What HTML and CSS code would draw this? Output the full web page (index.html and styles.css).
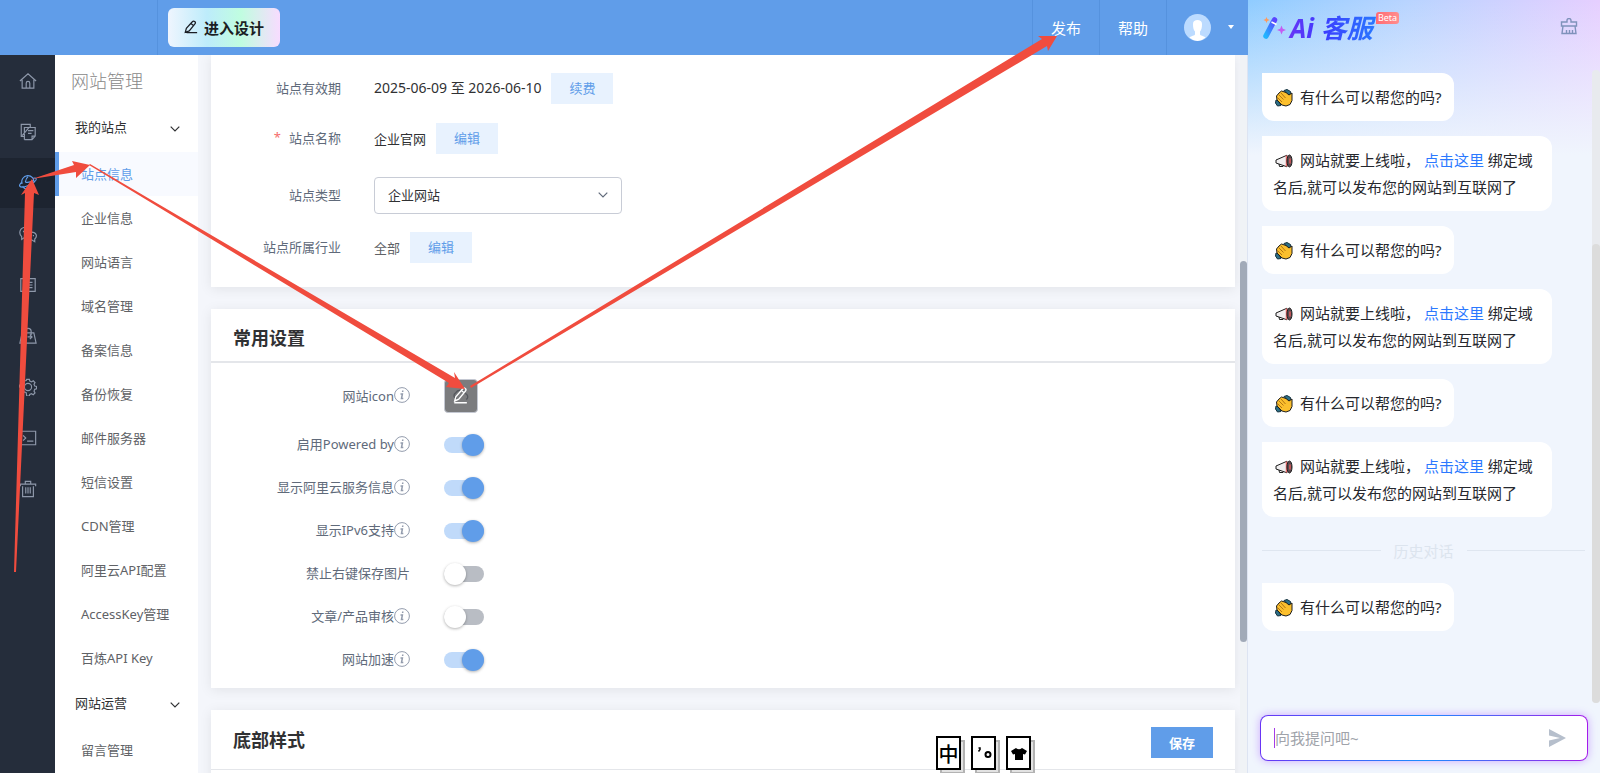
FILE: index.html
```
<!DOCTYPE html>
<html lang="zh-CN">
<head>
    <meta charset="UTF-8" />
    <meta name="viewport" content="width=device-width, initial-scale=1.0"/>
    <title>网站管理</title>
    <link rel="stylesheet" href="styles.css">
</head>
<body>
    <svg class="symbols" aria-hidden="true">
        <symbol id="i-pen" viewBox="0 0 16 16"><path d="M3 14.500h12M1.500 14l1.200-4.500L9.500 2a1.700 1.700 0 0 1 3 2.500L6 12.500zM8 4l3 2.500"/></symbol>
        <symbol id="i-down" viewBox="0 0 10 6"><path d="M0.700 0.700L5 5l4.300-4.300"/></symbol>
        <symbol id="i-info" viewBox="0 0 16 16"><circle cx="8" cy="8" r="7.400"/><path d="M8.800 3.500l-.2 1.500M6.500 7h1.900l-.9 4.500h1.800" stroke-width="1.500"/></symbol>
        <symbol id="i-clap" viewBox="0 0 18 18">
            <path d="M9 1.500L12 .5l3.500 2L16 6l-3 0zM1 11l2.500 1L6 16.500 2.500 17 .5 14z" fill="#2d6f86" stroke="#14323f" stroke-width="1"/>
            <path d="M1.500 7L4 4l2.500-2L11 3.500 14 6l3-2v7.500l-2 4-4 1.500-4-1-5-5z" fill="#fbbf2d" stroke="#1d1d1d" stroke-width="1"/>
            <path d="M3.500 5.500l5 5M6 4l4.500 5M2.500 8.500L7 13" fill="none" stroke="#b37412" stroke-width="1"/>
        </symbol>
        <symbol id="i-horn" viewBox="0 0 18 14">
            <path d="M1 6l11-4.800v11.600L1 9z" fill="#f1eff0" stroke="#1d1d1d" stroke-width="1"/>
            <path d="M4 10l.5 2.500h3.500l.5-1" fill="none" stroke="#1d1d1d"/>
            <path d="M11.500 1.500v11" stroke="#ef6a6a" stroke-width="1.500"/>
            <ellipse cx="14.500" cy="7" rx="2.500" ry="6" fill="#5a4a50" stroke="#1d1d1d"/>
            <path d="M15 4.500v5" stroke="#e05a5a" stroke-width="1.500"/>
        </symbol>
    </svg>

    <div class="app">
        <div class="workspace">
            <header class="topbar">
                <div class="topbar-brand"></div>
                <button class="btn-design"><svg class="icon icon-14"><use href="#i-pen"/></svg>进入设计</button>
                <nav class="topbar-nav">
                    <a href="#">发布</a>
                    <a href="#">帮助</a>
                    <button class="user-menu" aria-label="账户">
                        <svg class="avatar" viewBox="0 0 27 27">
                            <circle cx="13.500" cy="13.500" r="13.500" fill="#bcdbff"/>
                            <path d="M9 10c0-3 2-4 4.500-4s4.500 1 4.500 4c0 3.500-.5 6-2 7.500v3c0 1 4 1.500 5.500 3A13.500 13.500 0 0 1 13.500 27a13.500 13.500 0 0 1-8-3.500c1.500-1.500 5.500-2 5.500-3v-3C9.500 16 9 13.500 9 10z" fill="#fff"/>
                        </svg>
                        <span class="caret"></span>
                    </button>
                </nav>
            </header>

            <div class="main">
                <nav class="rail">
                    <a href="#" aria-label="首页"><svg class="icon" viewBox="0 0 20 20"><path d="M1 10l9-8 9 8M3.500 8.500V18h13V8.500M8 18v-5.500a2 2 0 0 1 4 0V18"/></svg></a>
                    <a href="#" aria-label="页面"><svg class="icon" viewBox="0 0 20 20"><path d="M6 15H2.500V1.500h10V4.500M6 18.500V5h12v9.500l-3.500 4H6M18 14.500h-3.500v4M10 8.500h6M10 11.500h4M3.500 14l8-9.500"/></svg></a>
                    <a href="#" class="active" aria-label="网站管理"><svg class="icon" viewBox="0 0 20 20"><path d="M3.500 11a6.800 6.800 0 1 1 13-1M4 13.500a6.800 6.800 0 0 0 11.500.5M3.800 8.500C1 10.500.2 12 .8 13.500c1.500 2 7 .5 11.500-1.800 5-2.700 7.500-5.200 6.700-6.700-.5-.8-1.700-.7-3.200-.3M7 9c3 1 7-.5 9.500-2M10 3c-1.500 1-2.500 3-3 6"/></svg></a>
                    <a href="#" aria-label="微信"><svg class="icon" viewBox="0 0 20 20"><path d="M8.500 14H6l-3 2v-3C-1 9 1 2.500 7.500 2.500c4 0 6 2.500 6.500 4.500M5 6.500v1.500M10 6.500v1.500M14 8c-7 0-7 8.500 0 8.500l3.500 2v-3C21 12.500 19 8 14 8M12 11v1.500M16 11v1.500"/></svg></a>
                    <a href="#" aria-label="内容"><svg class="icon" viewBox="0 0 20 20"><path d="M2 3h16v14H2zM8 7h7M8 10h7M8 13h7M5 7h1M5 10h1M5 13h1"/></svg></a>
                    <a href="#" aria-label="商城"><svg class="icon" viewBox="0 0 20 20"><path d="M3.500 6.500h13L19 18H1zM6.500 9V5a3.500 3.500 0 0 1 7 0v4M9.500 11h5M12 8.500l2.500 2.500-2.500 2.500"/></svg></a>
                    <a href="#" aria-label="设置"><svg class="icon" viewBox="0 0 20 20"><circle cx="10" cy="10" r="4"/><path d="M8.500 1.500h3l.5 2 2 .8 1.800-1.200 2 2-1.100 1.900.8 2 2 .5v2.500l-2 .6-.8 2 1.100 1.900-2 2-1.900-1.100-2 .8-.5 2H8.600L8 16.200l-2-.8-1.900 1.100-2-2 1.100-1.900-.8-2-1.900-.6V8l2-.6.8-1.900L2.200 3.600l2-1.500L6 3.300l2-.5z"/></svg></a>
                    <a href="#" aria-label="控制台"><svg class="icon" viewBox="0 0 20 20"><path d="M1.500 2.500h17v15h-17zM4.500 7l3 3-3 3M9 13.500h7"/></svg></a>
                    <a href="#" aria-label="回收站"><svg class="icon" viewBox="0 0 20 20"><path d="M1.500 7V4.500h17V7M7 4V1.500h6V4M4 7v11.500h12V7M7.500 8v7M10 8v7M12.500 8v7"/></svg></a>
                </nav>

                <aside class="submenu">
                    <h1 class="submenu-title">网站管理</h1>
                    <button class="submenu-group">我的站点<svg class="icon chevron"><use href="#i-down"/></svg></button>
                    <ul class="submenu-list">
                        <li><a href="#" class="active">站点信息</a></li>
                        <li><a href="#">企业信息</a></li>
                        <li><a href="#">网站语言</a></li>
                        <li><a href="#">域名管理</a></li>
                        <li><a href="#">备案信息</a></li>
                        <li><a href="#">备份恢复</a></li>
                        <li><a href="#">邮件服务器</a></li>
                        <li><a href="#">短信设置</a></li>
                        <li><a href="#">CDN管理</a></li>
                        <li><a href="#">阿里云API配置</a></li>
                        <li><a href="#">AccessKey管理</a></li>
                        <li><a href="#">百炼API Key</a></li>
                    </ul>
                    <button class="submenu-group">网站运营<svg class="icon chevron"><use href="#i-down"/></svg></button>
                    <ul class="submenu-list">
                        <li><a href="#">留言管理</a></li>
                    </ul>
                </aside>

                <main class="content">
                    <section class="card site-card">
                        <div class="row">
                            <span class="label">站点有效期</span>
                            <span class="value date">2025-06-09 至 2026-06-10</span>
                            <button class="btn-light">续费</button>
                        </div>
                        <div class="row">
                            <span class="label"><i class="required">*</i>站点名称</span>
                            <span class="value">企业官网</span>
                            <button class="btn-light">编辑</button>
                        </div>
                        <div class="row row-select">
                            <label class="label" for="site-type">站点类型</label>
                            <div class="select-box">
                                <select id="site-type"><option>企业网站</option></select>
                                <svg class="icon chevron"><use href="#i-down"/></svg>
                            </div>
                        </div>
                        <div class="row row-last">
                            <span class="label">站点所属行业</span>
                            <span class="value muted">全部</span>
                            <button class="btn-light">编辑</button>
                        </div>
                    </section>

                    <section class="card">
                        <div class="card-head">
                            <h2>常用设置</h2>
                        </div>
                        <div class="settings">
                            <div class="setting setting-icon">
                                <span class="label">网站icon<svg class="icon info"><use href="#i-info"/></svg></span>
                                <button class="icon-edit" aria-label="编辑图标">
                                    <svg class="icon" viewBox="0 0 20 20"><path class="cloud" d="M5 13a3.500 3.500 0 0 1-1-6.500A6 6 0 0 1 14.500 7a4 4 0 0 1 1.500 7"/><path d="M2.500 17.500h14M3 15.500l1.200-4.500L12 2a1.700 1.700 0 0 1 3 2.500L7.500 13.500zM10.500 4l3 2.500"/></svg>
                                </button>
                            </div>
                            <div class="setting">
                                <label class="label" for="s-powered">启用Powered by<svg class="icon info"><use href="#i-info"/></svg></label>
                                <input class="switch" type="checkbox" id="s-powered" checked>
                            </div>
                            <div class="setting">
                                <label class="label" for="s-aliyun">显示阿里云服务信息<svg class="icon info"><use href="#i-info"/></svg></label>
                                <input class="switch" type="checkbox" id="s-aliyun" checked>
                            </div>
                            <div class="setting">
                                <label class="label" for="s-ipv6">显示IPv6支持<svg class="icon info"><use href="#i-info"/></svg></label>
                                <input class="switch" type="checkbox" id="s-ipv6" checked>
                            </div>
                            <div class="setting">
                                <label class="label" for="s-save">禁止右键保存图片</label>
                                <input class="switch" type="checkbox" id="s-save">
                            </div>
                            <div class="setting">
                                <label class="label" for="s-review">文章/产品审核<svg class="icon info"><use href="#i-info"/></svg></label>
                                <input class="switch" type="checkbox" id="s-review">
                            </div>
                            <div class="setting">
                                <label class="label" for="s-speed">网站加速<svg class="icon info"><use href="#i-info"/></svg></label>
                                <input class="switch" type="checkbox" id="s-speed" checked>
                            </div>
                        </div>
                    </section>

                    <section class="card card-footer">
                        <div class="card-head">
                            <h2>底部样式</h2>
                            <button class="btn-save">保存</button>
                        </div>
                    </section>
                </main>
                <div class="scrollbar"><span class="scroll-thumb"></span></div>
            </div>
        </div>

        <aside class="chat">
            <header class="chat-head">
                <svg class="wand" viewBox="0 0 25 28">
                    <defs><linearGradient id="wand" x1="1" y1="0" x2="0" y2="1"><stop offset="0" stop-color="#5a44ff"/><stop offset="1" stop-color="#22b4ff"/></linearGradient></defs>
                    <path d="M12.500 6L4 22" fill="none" stroke="url(#wand)" stroke-width="5.500" stroke-linecap="round"/>
                    <path d="M9.500 8l5 2.500" stroke="#fff" stroke-width="1.500"/>
                    <path d="M4.500 3l.9 2.100L7.500 6l-2.100.9L4.500 9l-.9-2.100L1.500 6l2.100-.9z" fill="#ff9a5c"/>
                    <path d="M19.500 11.500l1.300 3.200L24 16l-3.200 1.300-1.300 3.200-1.300-3.200L15 16l3.200-1.300z" fill="#c45cf2"/>
                </svg>
                <strong class="chat-logo">Ai 客服</strong>
                <span class="beta">Beta</span>
                <button class="clear" aria-label="清空对话"><svg class="icon" viewBox="0 0 18 18"><path d="M7 4V2.500a2 2 0 0 1 4 0V4h5.500v4h-15V4zM3 8l-1 7.500h14L15 8M6.500 12v3.500M9.500 12v3.500M12.500 12v3.500"/></svg></button>
            </header>

            <div class="chat-body">
                <div class="messages">
                    <p class="bubble"><svg class="emoji"><use href="#i-clap"/></svg>有什么可以帮您的吗?</p>
                    <p class="bubble"><svg class="emoji"><use href="#i-horn"/></svg>网站就要上线啦， <a href="#">点击这里</a> 绑定域<wbr>名后,就可以发布您的网站到互联网了</p>
                    <p class="bubble"><svg class="emoji"><use href="#i-clap"/></svg>有什么可以帮您的吗?</p>
                    <p class="bubble"><svg class="emoji"><use href="#i-horn"/></svg>网站就要上线啦， <a href="#">点击这里</a> 绑定域<wbr>名后,就可以发布您的网站到互联网了</p>
                    <p class="bubble"><svg class="emoji"><use href="#i-clap"/></svg>有什么可以帮您的吗?</p>
                    <p class="bubble"><svg class="emoji"><use href="#i-horn"/></svg>网站就要上线啦， <a href="#">点击这里</a> 绑定域<wbr>名后,就可以发布您的网站到互联网了</p>
                    <div class="history">历史对话</div>
                    <p class="bubble"><svg class="emoji"><use href="#i-clap"/></svg>有什么可以帮您的吗?</p>
                </div>
                <div class="chat-scroll"><span class="chat-thumb"></span></div>
            </div>

            <form class="ask">
                <span class="text-caret"></span>
                <input type="text" placeholder="向我提问吧~" aria-label="向我提问">
                <button type="button" aria-label="发送"><svg viewBox="0 0 18 18"><path d="M1 0l17 9-17 9v-6.500L12 9 1 6.500z"/></svg></button>
            </form>
        </aside>
    </div>

    <!-- input method switcher floats over the page -->
    <div class="ime">
        <span class="ime-key">中</span>
        <span class="ime-key"><svg viewBox="0 0 20 20"><path d="M4.500 5h1.500v1.500L4.500 8.500" fill="none" stroke="#000" stroke-width="1.500"/><circle cx="14" cy="11.500" r="2.500" fill="none" stroke="#000" stroke-width="2"/></svg></span>
        <span class="ime-key"><svg viewBox="0 0 20 20"><path d="M7 5q3 2.500 6 0l5 3-2 3.500-2-.5v6H6v-6l-2 .5L2 8z"/></svg></span>
    </div>

    <!-- step arrows -->
    <svg class="arrows" width="1600" height="773" viewBox="0 0 1600 773" aria-hidden="true">
        <path d="M14 572L25 193l-4 2L32 179l7 16-5-2L16 572z"/>
        <path d="M32 179l42-14-2-4 18 4-14 13v-6z"/>
        <path d="M90 164L455 378l-1-6 11 17-19-2 3-4L89 165z"/>
        <path d="M470 386L1042 39l-4-3 19 0-9 15-1-5L471 388z"/>
    </svg>
</body>
</html>
```
FILE: styles.css
```
* {
    margin: 0;
    padding: 0;
    box-sizing: border-box;
}

body {
    font-family: "Noto Sans", "Noto Sans CJK SC", sans-serif;
    font-size: 13px;
    color: #303133;
    height: 100vh;
    overflow: hidden;
    position: relative;
}

a {
    color: inherit;
    text-decoration: none;
}

button,
input,
select {
    font: inherit;
    color: inherit;
    border: none;
    background: none;
}

button {
    cursor: pointer;
}

ul {
    list-style: none;
}

.symbols {
    position: absolute;
    width: 0;
    height: 0;
}

.icon {
    width: 20px;
    height: 20px;
    fill: none;
    stroke: currentColor;
    stroke-width: 1;
    flex: none;
}

.icon-14 {
    width: 14px;
    height: 14px;
    stroke-width: 1.4;
}

.app {
    display: flex;
    height: 100vh;
}

.workspace {
    flex: 1;
    min-width: 0;
    display: flex;
    flex-direction: column;
}

/* top bar */
.topbar {
    height: 55px;
    flex: none;
    display: flex;
    align-items: center;
    background: #609de9;
    color: #fff;
}

.topbar-brand {
    width: 158px;
    height: 100%;
    border-right: 1px solid #5592de;
}

.btn-design {
    display: flex;
    align-items: center;
    justify-content: center;
    gap: 6px;
    width: 112px;
    height: 39px;
    margin-left: 10px;
    padding-bottom: 1px;
    border-radius: 6px;
    background: linear-gradient(to right, #eff5fe, #bdecfb 35%, #c0fde0 65%, #f8dcff);
    color: #1b1e24;
    font-size: 15px;
    font-weight: 600;
}

.topbar-nav {
    display: flex;
    height: 100%;
    margin-left: auto;
    font-size: 15px;
}

.topbar-nav a,
.user-menu {
    display: flex;
    align-items: center;
    justify-content: center;
    width: 67px;
    padding-bottom: 1px;
    border-left: 1px solid #5592de;
}

.topbar-nav .user-menu {
    width: 82px;
    gap: 17px;
    padding-left: 2px;
}

.avatar {
    width: 27px;
    height: 27px;
}

.caret {
    border: 3px solid transparent;
    border-top: 4px solid #fff;
    border-bottom: none;
}

.main {
    flex: 1;
    min-height: 0;
    display: flex;
}

/* icon rail */
.rail {
    width: 55px;
    flex: none;
    padding-top: 1px;
    background: #252d3b;
    color: #8e98aa;
}

.rail a {
    height: 50px;
    display: flex;
    align-items: center;
    justify-content: center;
    margin-bottom: 1px;
}

.rail .active {
    background: #1d2430;
    color: #609de9;
}

.rail .icon {
    width: 18px;
    height: 18px;
    stroke-width: 1.3;
}

/* second level menu */
.submenu {
    width: 143px;
    flex: none;
    background: #fff;
    overflow: hidden;
}

.submenu-title {
    padding-left: 16px;
    height: 49px;
    line-height: 52px;
    font-size: 18px;
    font-weight: 300;
    color: #888;
}

.submenu-group {
    display: flex;
    align-items: center;
    justify-content: space-between;
    width: 100%;
    height: 48px;
    padding: 0 18px 3px 20px;
}

.submenu-group .chevron {
    margin-top: 5px;
}

.chevron {
    width: 10px;
    height: 6px;
    stroke-width: 1.2;
}

.submenu-list a {
    display: block;
    height: 44px;
    line-height: 44px;
    padding-left: 22px;
    border-left: 4px solid transparent;
    color: #606266;
}

.submenu-list .active {
    border-left-color: #609de9;
    background: #f8faff;
    color: #609de9;
}

/* content cards */
.content {
    flex: 1;
    min-width: 0;
    padding: 0 5px 0 13px;
    background: #f4f6fb;
    overflow: hidden;
}

.card {
    background: #fff;
    box-shadow: 0 2px 12px rgba(0, 0, 0, 0.08);
    margin-bottom: 22px;
}

.site-card {
    padding: 8px 0 20px;
}

.row {
    display: flex;
    align-items: center;
    height: 50px;
    gap: 10px;
}

.row-select {
    height: 64px;
}

.row-last {
    height: 40px;
}

.label {
    display: flex;
    align-items: center;
    justify-content: flex-end;
    padding-bottom: 2px;
    color: #606a7a;
}

.row .label {
    width: 130px;
    margin-right: 23px;
}

.required {
    margin-right: 8px;
    font-style: normal;
    color: #f56c6c;
}

.date {
    padding-bottom: 2px;
    font-size: 14px;
}

.muted {
    color: #606266;
}

.btn-light {
    width: 62px;
    height: 31px;
    padding-bottom: 2px;
    background: #e8f2fe;
    color: #609de9;
}

.select-box {
    display: flex;
    align-items: center;
    position: relative;
}

.select-box select {
    appearance: none;
    width: 248px;
    height: 37px;
    padding: 0 13px;
    border: 1px solid #c8ccd6;
    border-radius: 4px;
    background: #fff;
}

.select-box .chevron {
    position: absolute;
    right: 14px;
    color: #606a7a;
    pointer-events: none;
}

.card-head {
    display: flex;
    align-items: center;
    justify-content: space-between;
    height: 54px;
    padding: 4px 22px 0;
    border-bottom: 2px solid #e4e6ea;
}

.card-head h2 {
    font-size: 18px;
    font-weight: 700;
}

.settings {
    padding: 6px 0 7px;
}

.setting {
    display: flex;
    align-items: center;
    height: 43px;
    gap: 34px;
}

.setting-icon {
    height: 54px;
}

.setting .label {
    width: 199px;
}

.info {
    width: 16px;
    height: 16px;
    color: #939cad;
}

.icon-edit {
    display: flex;
    align-items: center;
    justify-content: center;
    width: 34px;
    height: 34px;
    border: 1px solid #c4c8d2;
    border-radius: 4px;
    background: #7b7c7e;
    color: #fff;
}

.icon-edit .icon {
    width: 18px;
    height: 18px;
    stroke-width: 1.5;
}

.icon-edit .cloud {
    stroke: #55585d;
}

.switch {
    appearance: none;
    display: flex;
    align-items: center;
    width: 40px;
    height: 16px;
    border-radius: 8px;
    background: #b9bdc4;
    cursor: pointer;
}

.switch::before {
    content: "";
    width: 22px;
    height: 22px;
    flex: none;
    border-radius: 50%;
    background: #fff;
    box-shadow: 0 1px 3px rgba(0, 0, 0, 0.3);
}

.switch:checked {
    justify-content: flex-end;
    background: #c0dafa;
}

.switch:checked::before {
    background: #609de9;
}

.card-footer {
    height: 120px;
}

.card-footer .card-head {
    height: 60px;
    padding-top: 5px;
    border-bottom-width: 1px;
}

.card-footer h2 {
    padding-bottom: 6px;
}

.btn-save {
    width: 62px;
    height: 31px;
    background: #609de9;
    color: #fff;
    font-weight: 700;
}

.scrollbar {
    width: 8px;
    flex: none;
    padding-top: 206px;
    background: #f0f3f6;
    border-right: 1px solid #dde4f2;
}

.scroll-thumb {
    display: block;
    height: 381px;
    border-radius: 4px;
    background: #a1aab8;
}

/* chat panel */
.chat {
    width: 352px;
    flex: none;
    display: flex;
    flex-direction: column;
    background:
        linear-gradient(to bottom, rgba(240, 245, 254, 0), #f0f5fd 155px),
        linear-gradient(to right, #8fccff, #b8d4ff 45%, #e6cfff);
    font-size: 15px;
}

.chat-head {
    display: flex;
    height: 73px;
    flex: none;
    padding: 12px 22px 0 14px;
}

.wand {
    width: 25px;
    height: 28px;
    margin-top: 2px;
}

.chat-logo {
    height: 32px;
    line-height: 32px;
    padding: 0 3px;
    font-size: 26px;
    font-weight: 700;
    font-style: italic;
    background: linear-gradient(to right, #6a35f5, #3c3cff 40%, #2878ff);
    background-clip: text;
    color: transparent;
}

.beta {
    height: 12px;
    line-height: 12px;
    padding: 0 2px;
    border-radius: 3px 3px 3px 0;
    background: linear-gradient(to right, #ff6a72, #ff8e8e);
    color: #fff;
    font-size: 9px;
}

.clear {
    width: 18px;
    height: 18px;
    margin: 6px 0 0 auto;
    color: #7f92bb;
}

.clear .icon {
    width: 18px;
    height: 18px;
    stroke-width: 1.4;
}

.chat-body {
    flex: 1;
    min-height: 0;
    display: flex;
}

.messages {
    flex: 1;
    display: flex;
    flex-direction: column;
    align-items: flex-start;
    gap: 15px;
    padding-left: 14px;
}

.bubble {
    max-width: 290px;
    padding: 11px 12px 10px 11px;
    border-radius: 0 12px 12px 12px;
    background: #fff;
    color: #26282e;
    line-height: 27px;
}

.bubble a {
    color: #2b79ff;
}

.emoji {
    width: 18px;
    height: 18px;
    margin: 0 7px 0 2px;
    vertical-align: -4px;
}

.history {
    display: flex;
    align-items: center;
    gap: 13px;
    align-self: stretch;
    height: 36px;
    margin-right: 7px;
    color: #dce4ee;
}

.history::before,
.history::after {
    content: "";
    flex: 1;
    height: 1px;
    background: #dfe6f0;
}

.chat-scroll {
    width: 8px;
    margin-top: -3px;
    padding-top: 174px;
    border-radius: 4px;
    background: #e8eaee;
    align-self: flex-start;
}

.chat-thumb {
    display: block;
    height: 459px;
    border-radius: 4px;
    background: #dcdcdc;
}

.ask {
    display: flex;
    align-items: center;
    height: 46px;
    margin: 0 12px;
    margin-bottom: 12px;
    padding: 0 21px 0 13px;
    border: 1px solid transparent;
    border-radius: 8px;
    background:
        linear-gradient(#fff, #fff) padding-box,
        linear-gradient(to right, #6a35f5, #1b8dff 50%, #a51bea) border-box;
    box-shadow: 0 0 8px rgba(150, 60, 255, 0.4);
}

.text-caret {
    width: 1px;
    height: 20px;
    background: #a33be8;
}

.ask input {
    flex: 1;
    min-width: 0;
    outline: none;
}

.ask input::placeholder {
    color: #a0a3aa;
}

.ask button,
.ask svg {
    width: 18px;
    height: 18px;
    fill: #b6bfcc;
}

/* overlays */
.ime {
    position: absolute;
    left: 936px;
    bottom: 3px;
    display: flex;
    gap: 10px;
}

.ime-key {
    display: flex;
    align-items: center;
    justify-content: center;
    width: 25px;
    height: 34px;
    border: 2px solid #000;
    background: #fff;
    box-shadow: 4px 4px 0 -2px #e2e2e2, 4px 4px 0 #b3b3b3;
    color: #000;
    font-size: 20px;
    font-weight: 500;
}

.ime-key svg {
    width: 20px;
    height: 20px;
}

.arrows {
    position: absolute;
    left: 0;
    top: 0;
    fill: #f04c3e;
    pointer-events: none;
}
```
